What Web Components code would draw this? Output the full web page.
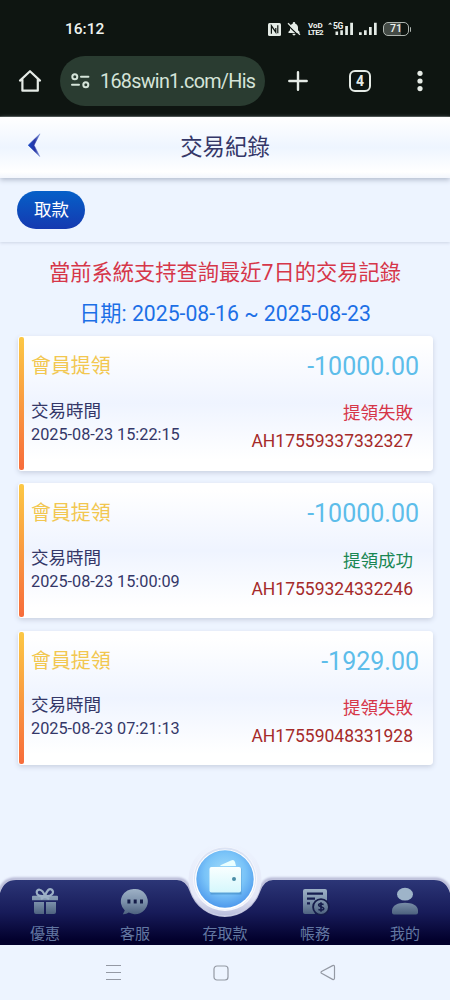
<!DOCTYPE html>
<html lang="zh-Hant">
<head>
<meta charset="utf-8">
<meta name="viewport" content="width=device-width, initial-scale=1">
<title>交易紀錄</title>
<style>
  body {
    margin: 0;
    background: #edf4ff;
    font-family: Roboto, "Noto Sans CJK TC", sans-serif;
  }
</style>
</head>
<body>
<phone-screen>
  <status-bar slot="top" time="16:12" battery="71"></status-bar>
  <browser-bar slot="top" tabs="4">168swin1.com/His</browser-bar>
  <page-header>交易紀錄</page-header>
  <filter-tabs><span>取款</span></filter-tabs>
  <query-notice>
    當前系統支持查詢最近7日的交易記錄
    <span slot="range">日期: 2025-08-16 ~ 2025-08-23</span>
  </query-notice>
  <record-list>
    <record-card amount="-10000.00" time="2025-08-23 15:22:15" status="提領失敗" order="AH17559337332327">會員提領</record-card>
    <record-card amount="-10000.00" time="2025-08-23 15:00:09" status="提領成功" order="AH17559324332246" success>會員提領</record-card>
    <record-card amount="-1929.00" time="2025-08-23 07:21:13" status="提領失敗" order="AH17559048331928">會員提領</record-card>
  </record-list>
  <tab-bar slot="bottom">
    <tab-item icon="gift">優惠</tab-item>
    <tab-item icon="chat">客服</tab-item>
    <tab-item icon="wallet">存取款</tab-item>
    <tab-item icon="bill">帳務</tab-item>
    <tab-item icon="user">我的</tab-item>
  </tab-bar>
  <system-nav slot="bottom"></system-nav>
</phone-screen>

<script>
class BaseElement extends HTMLElement {
  constructor() {
    super();
    this.attachShadow({ mode: 'open' });
  }

  connectedCallback() {
    const template = document.createElement('template');
    template.innerHTML = this.render();
    this.shadowRoot.replaceChildren(template.content.cloneNode(true));
  }
}

class PhoneScreen extends BaseElement {
  render() {
    return `
      <style>
        :host {
          display: flex;
          flex-direction: column;
          width: 450px;
          height: 1000px;
          overflow: hidden;
        }
        main { flex: 1; min-height: 0; }
      </style>
      <slot name="top"></slot>
      <main><slot></slot></main>
      <slot name="bottom"></slot>
    `;
  }
}

class StatusBar extends BaseElement {
  render() {
    return `
      <style>
        :host {
          display: flex;
          justify-content: space-between;
          align-items: center;
          height: 56px;
          padding: 2px 39px 0 65px;
          box-sizing: border-box;
          background: #0e1511;
          color: #eef3ef;
          flex: none;
        }
        time { font: 500 15.5px/20px Roboto, sans-serif; }
        .icons { display: flex; align-items: center; }
        .volte { font: 700 8px/7px Roboto, sans-serif; letter-spacing: -0.6px; margin-left: 7px; width: 16px; }
        .volte span { display: block; white-space: nowrap; }
        .volte span:first-child { letter-spacing: 0; }
        .net { display: flex; align-items: flex-start; height: 14px; margin-left: 4px; }
        .net small { font: 700 8.5px/8px Roboto, sans-serif; letter-spacing: -0.3px; width: 10px; margin-right: -9px; }
        .battery {
          width: 24px;
          height: 12px;
          border: 1px solid #aeb5b0;
          border-radius: 5px;
          margin-left: 6px;
          font: 500 10.5px/12px Roboto, sans-serif;
          text-align: center;
          background: linear-gradient(90deg, #444b46 70%, transparent 70%);
        }
        .cap { width: 1.5px; height: 5px; margin-left: 0.5px; background: #aeb5b0; border-radius: 0 2px 2px 0; }
        svg { display: block; fill: #e4ebe6; flex: none; }
      </style>
      <time>${this.getAttribute('time')}</time>
      <div class="icons">
        <svg width="13" height="13" viewBox="0 0 13 13">
          <rect width="13" height="13" rx="1.5"/>
          <path d="M3.4 10.8V2.8L7.8 9.2V5M9.8 2.2v8" fill="none" stroke="#0e1511" stroke-width="1.2"/>
        </svg>
        <svg width="14" height="14" viewBox="0 0 14 14" style="margin-left:6px">
          <path d="M1.5 11V9.8L3 8.2V5.5C3 3.4 4.3 2.3 5.7 1.8V1.4a1.3 1.3 0 0 1 2.6 0V1.8C10 2.3 11 3.9 11 5.5V8.2l1.5 1.6V11zM5.4 11.8h3.2a1.6 1.6 0 0 1-3.2 0z"/>
          <path d="M.2 2.5 12 13.9" stroke="#0e1511" stroke-width="1.2"/>
          <path d="M1 1.2 13 12.8" stroke="#e4ebe6" stroke-width="1.3"/>
        </svg>
        <div class="volte"><span>VoD</span><span>LTE2</span></div>
        <div class="net">
          <svg width="5" height="4" viewBox="0 0 5 4"><path d="m0 2.6 2.2-2 2.2 2z"/></svg>
          <small>5G</small>
          <svg width="20" height="14" viewBox="0 0 20 14"><path d="M1.5 9.5h2.6V13H1.5zM6.3 8.3h2.6V13H6.3zM11.2 4h2.7v9h-2.7zM16.2.8H19V13h-2.8z"/></svg>
        </div>
        <svg width="18" height="14" viewBox="0 0 18 14" style="margin-left:5px"><path d="M0 10.3h2.7V13H0zM5 8.3h2.7V13H5zM10 5h2.7v8H10zM15 .8h2.7V13H15z"/></svg>
        <div class="battery">${this.getAttribute('battery')}</div>
        <i class="cap"></i>
      </div>
    `;
  }
}

class BrowserBar extends BaseElement {
  render() {
    return `
      <style>
        :host {
          display: flex;
          align-items: flex-start;
          height: 61px;
          padding-left: 16px;
          box-sizing: border-box;
          background: #0e1511;
          border-bottom: 1px solid #39403c;
          flex: none;
        }
        svg { display: block; flex: none; }
        .button { height: 50px; display: flex; align-items: center; justify-content: center; }
        .address {
          display: flex;
          align-items: center;
          width: 205px;
          height: 50px;
          margin-left: 16px;
          padding-left: 11px;
          box-sizing: border-box;
          border-radius: 25px;
          background: #2a3c31;
          color: #d5e4d9;
        }
        .address div {
          margin-left: 10px;
          white-space: nowrap;
          font-size: 19.8px;
          letter-spacing: -0.72px;
          line-height: 50px;
          padding-top: 2px;
        }
        .tabs {
          width: 18px;
          height: 18px;
          border: 2.5px solid #e5ebe6;
          border-radius: 6px;
          color: #e5ebe6;
          font: 700 14px/18px Roboto, sans-serif;
          text-align: center;
        }
      </style>
      <div class="button">
        <svg width="28" height="28" viewBox="0 0 28 28" fill="none" stroke="#e5ebe6" stroke-width="2.2" stroke-linejoin="round" stroke-linecap="round">
          <path d="M6.4 12.5v11.2h15.4V12.5M4 13.6l10-9.4 10 9.4"/>
        </svg>
      </div>
      <div class="address">
        <svg width="19" height="18" viewBox="0 0 19 18" fill="none" stroke="#d5e4d9" stroke-width="2" stroke-linecap="round">
          <circle cx="3.8" cy="4.8" r="2.5"/><path d="M10 4.8h7.4M1 12.8h7"/><circle cx="14.8" cy="12.8" r="2.5"/>
        </svg>
        <div><slot></slot></div>
      </div>
      <div class="button" style="width:65px">
        <svg width="20" height="20" viewBox="0 0 20 20" stroke="#e5ebe6" stroke-width="2.4" stroke-linecap="round"><path d="M1.3 10h17.4M10 1.3v17.4"/></svg>
      </div>
      <div class="button" style="width:60px"><div class="tabs">${this.getAttribute('tabs')}</div></div>
      <div class="button" style="width:60px">
        <svg width="6" height="22" viewBox="0 0 6 22" fill="#e5ebe6"><circle cx="3" cy="3.3" r="2.6"/><circle cx="3" cy="11" r="2.6"/><circle cx="3" cy="18.6" r="2.6"/></svg>
      </div>
    `;
  }
}

class PageHeader extends BaseElement {
  render() {
    return `
      <style>
        :host {
          display: grid;
          grid-template-columns: 60px 1fr 60px;
          align-items: center;
          height: 61px;
          position: relative;
          background: linear-gradient(#fff, #eef5ff 50%, #fff 90%, #f3f6fd);
          box-shadow: 0 2px 5px #b3bccd;
        }
        h1 {
          margin: 0;
          padding-bottom: 2px;
          text-align: center;
          color: #343768;
          font-weight: 400;
          font-size: 22.4px;
          line-height: 30px;
        }
        svg { display: block; margin: -6px 0 0 27px; }
      </style>
      <svg width="15" height="24" viewBox="0 0 15 24">
        <defs>
          <linearGradient id="g" x1="0" x2="1"><stop stop-color="#1848c4"/><stop offset=".55" stop-color="#2735a5"/><stop offset="1" stop-color="#7d94d8"/></linearGradient>
        </defs>
        <path d="M13 .8 1.2 12.2 12.8 23.5 7 12.2z" fill="url(#g)" stroke="url(#g)" stroke-width=".6"/>
      </svg>
      <h1><slot></slot></h1>
    `;
  }
}

class FilterTabs extends BaseElement {
  render() {
    return `
      <style>
        :host {
          display: flex;
          align-items: center;
          height: 64px;
          padding: 0 17.4px;
          box-sizing: border-box;
          box-shadow: 0 1px 3px #cdd5e6;
        }
        ::slotted(span) {
          width: 68px;
          height: 38px;
          margin-bottom: 1px;
          border-radius: 19px;
          background: linear-gradient(#0560c8, #1539b0);
          color: #fff;
          font-size: 17.5px;
          line-height: 38px;
          text-align: center;
        }
      </style>
      <slot></slot>
    `;
  }
}

class QueryNotice extends BaseElement {
  render() {
    return `
      <style>
        :host { display: block; padding-top: 11px; text-align: center; height: 94px; box-sizing: border-box; }
        p { margin: 0; white-space: nowrap; }
        .text { color: #d63649; font-size: 21.25px; line-height: 40px; }
        .range { color: #1c6fe6; font-size: 21.2px; line-height: 41px; }
      </style>
      <p class="text"><slot></slot></p>
      <p class="range"><slot name="range"></slot></p>
    `;
  }
}

class RecordList extends BaseElement {
  render() {
    return `
      <style>
        :host { display: flex; flex-direction: column; gap: 12.4px; padding: 0 17px 0 18px; }
      </style>
      <slot></slot>
    `;
  }
}

class RecordCard extends BaseElement {
  render() {
    return `
      <style>
        :host {
          display: flex;
          height: 134.9px;
          padding: 1px;
          box-sizing: border-box;
          border-radius: 4px;
          background: linear-gradient(#fff 5%, #eff4ff 50%, #fff 92%);
          box-shadow: 0 2px 5px #cad1e1;
        }
        .stripe { width: 5px; border-radius: 2px; background: linear-gradient(#fcc845, #f76c3b); }
        .body { flex: 1; padding: 11px 13px 0 7px; }
        .row { display: flex; justify-content: space-between; }
        .title { color: #f2c750; font-size: 19.9px; line-height: 38px; }
        .amount { color: #5dbdea; font-size: 25px; line-height: 37px; }
        .detail { color: #343768; margin-top: 12.6px; font-size: 17.5px; line-height: 24px; }
        .detail div + div { font-size: 16.25px; line-height: 23px; }
        .result { margin: 13.3px 6px 0 0; text-align: right; font-size: 17.5px; line-height: 29px; color: #d63649; }
        .result.success { color: #198754; }
        .result div + div { font-size: 17.5px; line-height: 27px; color: #a52a2a; }
      </style>
      <div class="stripe"></div>
      <div class="body">
        <div class="row">
          <div class="title"><slot></slot></div>
          <div class="amount">${this.getAttribute('amount')}</div>
        </div>
        <div class="row">
          <div class="detail">
            <div>交易時間</div>
            <div>${this.getAttribute('time')}</div>
          </div>
          <div class="result ${this.hasAttribute('success') ? 'success' : ''}">
            <div>${this.getAttribute('status')}</div>
            <div>${this.getAttribute('order')}</div>
          </div>
        </div>
      </div>
    `;
  }
}

class TabBar extends BaseElement {
  render() {
    // the curve dips in the middle to make room for the round wallet button
    return `
      <style>
        :host {
          display: grid;
          grid-template-columns: repeat(5, 1fr);
          height: 65px;
          position: relative;
          flex: none;
        }
        .shape { position: absolute; left: 0; bottom: 0; }
      </style>
      <svg class="shape" width="450" height="105" viewBox="0 840 450 105">
        <defs>
          <linearGradient id="bar" x1="0" y1="880" x2="0" y2="945" gradientUnits="userSpaceOnUse">
            <stop stop-color="#2c3677"/><stop offset=".5" stop-color="#171b59"/><stop offset=".93" stop-color="#02002c"/>
          </linearGradient>
          <filter id="soft" x="-10%" y="-30%" width="120%" height="160%"><feGaussianBlur stdDeviation="1.3"/></filter>
        </defs>
        <path d="M-2 896Q2 879 15 879H178Q187 879 191 893A36 36 0 0 0 259 893Q263 879 272 879H435Q448 879 452 896" fill="none" stroke="#b3b4d2" stroke-width="3" filter="url(#soft)"/>
        <path d="M0 945V893Q4 880 16 880H177Q186 880 190 892A37 37 0 0 0 260 892Q264 880 273 880H434Q446 880 450 893V945Z" fill="url(#bar)"/>
      </svg>
      <slot></slot>
    `;
  }
}

const ICONS = {
  gift: `
    <path d="M3 8.8h24q1 0 1 1v3.4H2V9.8q0-1 1-1zM4 15h10v12H6q-2 0-2-2zM16 15h10v10q0 2-2 2h-8z" fill="url(#metal)"/>
    <path d="M15 9Q7 10 6.7 5.5C6.5 2 12 .5 15 9Q18 .5 21.5 2.5c4 3-.5 7.5-6.5 6.5M15 9l-4 3M15 9l4 3" fill="none" stroke="#9cb0c6" stroke-width="2.2"/>`,
  chat: `
    <path d="M15.2 2A12.8 12.6 0 1 1 8.8 25.6Q6 27.6 2.8 27.3L4.8 23.6A12.8 12.6 0 0 1 15.2 2z" fill="url(#metal)"/>
    <path d="M7.4 12.5h3v4h-3zM13.7 12.5h3v4h-3zM20 12.5h3v4h-3z" fill="#151d49"/>`,
  bill: `
    <path d="M5 2h20q2 0 2 2v23H5q-2 0-2-2V4q0-2 2-2z" fill="url(#metal)"/>
    <path d="M7 6.6h16M7 11.6h8M7 16.4h3" stroke="#171e50" stroke-width="2.4"/>
    <circle cx="21" cy="20" r="8.8" fill="#151b4a"/>
    <circle cx="21" cy="20" r="7" fill="url(#metal)"/>
    <path d="M23.6 17.4q-5-1.5-5 .7c0 2 5.2 1.4 5.2 3.6q-.6 2.2-5.4.8M21 15.2v9.6" fill="none" stroke="#151b4a" stroke-width="1.6"/>`,
  user: `
    <ellipse cx="15" cy="7.2" rx="8" ry="6.4" fill="#9eb4c9"/>
    <path d="M2 25.5v-2C2 18.5 8 15.8 15 15.8s13 2.7 13 7.7v2q0 2-2 2H4q-2 0-2-2z" fill="url(#metal)"/>`
};

class TabItem extends BaseElement {
  render() {
    const icon = this.getAttribute('icon');
    return `
      <style>
        :host {
          display: flex;
          flex-direction: column;
          align-items: center;
          position: relative;
          padding-top: 7px;
          color: #6378a2;
          font-size: 15px;
          line-height: 20px;
        }
        .label { margin-top: 7px; white-space: nowrap; }
        .icon { height: 30px; }
        .wallet { width: 78px; margin-top: -41px; height: 71px; }
        svg { display: block; }
      </style>
      ${icon === 'wallet' ? this.wallet() : `
      <svg class="icon" width="30" height="30" viewBox="0 0 30 30">
        <defs><linearGradient id="metal" x1="0" y1="0" x2="0" y2="30" gradientUnits="userSpaceOnUse"><stop stop-color="#a3b6ca"/><stop offset=".5" stop-color="#7b90aa"/><stop offset="1" stop-color="#435775"/></linearGradient></defs>
        ${ICONS[icon]}
      </svg>`}
      <div class="label"><slot></slot></div>
    `;
  }

  wallet() {
    return `
      <svg class="wallet" width="78" height="71" viewBox="0 0 78 71">
        <defs>
          <radialGradient id="disc" cx=".5" cy=".4" r=".65"><stop stop-color="#a5defa"/><stop offset=".55" stop-color="#79c3f8"/><stop offset="1" stop-color="#4691ea"/></radialGradient>
          <linearGradient id="ring" x1="0" y1="0" x2="0" y2="1"><stop stop-color="#edf4ff"/><stop offset=".75" stop-color="#e5e8f7"/><stop offset="1" stop-color="#b9bddb"/></linearGradient>
          <linearGradient id="paper" x1="0" y1="0" x2="0" y2="1"><stop stop-color="#f9ffff"/><stop offset="1" stop-color="#d5f7fc"/></linearGradient>
        </defs>
        <circle cx="39" cy="33" r="36.5" fill="url(#ring)"/>
        <circle cx="39" cy="33" r="32" fill="#f6f7fd"/>
        <circle cx="39" cy="32.5" r="31" fill="#dbe3f4"/>
        <circle cx="39" cy="33.5" r="30" fill="#fff"/>
        <circle cx="39" cy="33" r="28.7" fill="url(#disc)"/>
        <path d="M24 23h31v26H24z" fill="#317bb1" opacity=".45" transform="translate(.5 -.5)"/>
        <path d="M35 19 45 14.5q3-1.5 4 1.5l1 4H34z" fill="#eaffff"/>
        <rect x="23.5" y="21" width="31.5" height="25.5" rx="2" fill="url(#paper)"/>
        <circle cx="48" cy="33" r="2" fill="#4b8da6"/>
      </svg>
    `;
  }
}

class SystemNav extends BaseElement {
  render() {
    return `
      <style>
        :host {
          display: flex;
          align-items: center;
          gap: 91px;
          height: 55px;
          padding-left: 105px;
          box-sizing: border-box;
          background: #edf4ff;
          position: relative;
          flex: none;
        }
        svg { display: block; fill: none; stroke: #9499a4; stroke-width: 1.2; stroke-linejoin: round; }
      </style>
      <svg width="17" height="17" viewBox="0 0 17 17"><path d="M1 1.5h15M1 8.5h15M1 15.5h15"/></svg>
      <svg width="16" height="16" viewBox="0 0 16 16"><rect x="1" y="1" width="14" height="14" rx="3"/></svg>
      <svg width="16" height="17" viewBox="0 0 16 17"><path d="M1.5 7.5Q.5 8.5 1.5 9.3L12.6 15.4Q14.5 16 14.5 14V3Q14.5.8 12.6 1.6z"/></svg>
    `;
  }
}

customElements.define('phone-screen', PhoneScreen);
customElements.define('status-bar', StatusBar);
customElements.define('browser-bar', BrowserBar);
customElements.define('page-header', PageHeader);
customElements.define('filter-tabs', FilterTabs);
customElements.define('query-notice', QueryNotice);
customElements.define('record-list', RecordList);
customElements.define('record-card', RecordCard);
customElements.define('tab-bar', TabBar);
customElements.define('tab-item', TabItem);
customElements.define('system-nav', SystemNav);
</script>
</body>
</html>
